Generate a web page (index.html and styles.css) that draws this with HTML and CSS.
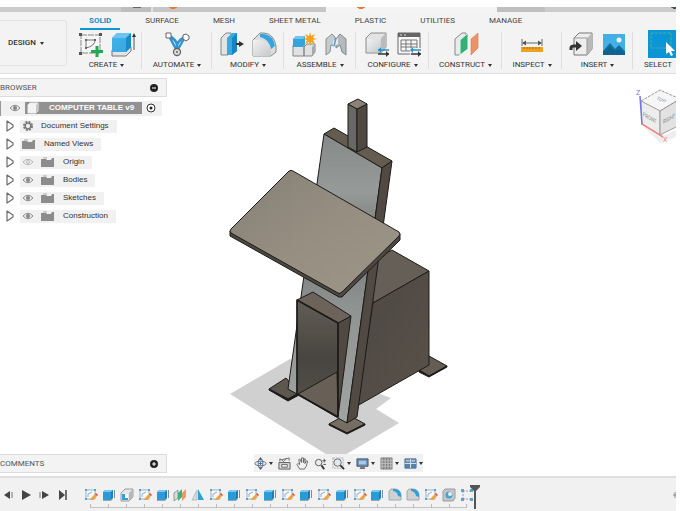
FILE: index.html
```html
<!DOCTYPE html>
<html lang="en">
<head>
<meta charset="utf-8">
<title>Computer table v9</title>
<meta name="viewport" content="width=device-width, initial-scale=1">
<link rel="stylesheet" href="styles.css">
</head>
<body>
<svg class="defs" aria-hidden="true">
  <defs>
    <linearGradient id="gBlue" x1="0" y1="0" x2="1" y2="1"><stop offset="0" stop-color="#45b4ea"/><stop offset="1" stop-color="#35a5e0"/></linearGradient>
    <linearGradient id="gGrey" x1="0" y1="0" x2="1" y2="1"><stop offset="0" stop-color="#f2f2f2"/><stop offset="1" stop-color="#c6c8ca"/></linearGradient>
  </defs>
  <symbol id="t-sketch" viewBox="0 0 14 14"><path d="M2 2h9v9H2z" fill="#f7fafc" stroke="#8fb3cc" stroke-width="1"/><path d="M4 9V6l4-2" fill="none" stroke="#9ab" /><path d="M1 1h2v2H1zM10 1h2v2h-2zM1 10h2v2H1z" fill="#6d9dbd"/><path d="M6 12l1-2 4-4 2 2-4 4z" fill="#f0a23c"/><path d="M11 6l1-1 2 2-1 1z" fill="#d8473b"/></symbol>
  <symbol id="t-extrude" viewBox="0 0 14 14"><path d="M1 4l2-2h8v7l-2 3H1z" fill="#2a9bd8"/><path d="M1 4l2-2h8L9 4z" fill="#7cc9ee"/><path d="M9 4l2-2v8l-2 2z" fill="#1c7fb8"/><path d="M1 12h8l2-2v1l-2 2H1z" fill="#9aa"/><path d="M12.500 2v8" stroke="#889" stroke-width="1"/></symbol>
  <symbol id="t-shell" viewBox="0 0 14 14"><path d="M1 5l4-4h8v8l-4 4H1z" fill="#e6e7e8" stroke="#9b9da0"/><path d="M9 5l4-4v8l-4 4z" fill="#b5b7b9"/><path d="M2 6h6v6H2z" fill="#3a9fd3"/><path d="M5 6h3v4H5z" fill="#fff"/></symbol>
  <symbol id="t-plane" viewBox="0 0 14 14"><path d="M1 5l4-3v8l-4 3z" fill="#d8dadb" stroke="#999"/><path d="M5 5l4-4v8l-4 4z" fill="#39b37a"/><path d="M9 5l4-4v8l-4 4z" fill="#ef9765"/></symbol>
  <symbol id="t-mirror" viewBox="0 0 14 14"><path d="M6 2v10H1z" fill="#d9dcdf" stroke="#a9adb0" stroke-width=".7"/><path d="M7 1l6 11H7z" fill="#329ed6"/></symbol>
  <symbol id="t-fillet" viewBox="0 0 14 14"><path d="M1 3l2-2h4a6 6 0 0 1 6 6v5H1z" fill="#cfd1d2" stroke="#a6a8aa"/><path d="M5 1h2a6 6 0 0 1 6 6v2l-3-1a6 6 0 0 0-5-5z" fill="#2e9fd8"/></symbol>
  <symbol id="t-hole" viewBox="0 0 14 14"><path d="M1 3l2-2h10v9l-2 3H1z" fill="#c4c6c8" stroke="#999b9d"/><circle cx="7" cy="7" r="3.500" fill="#4aa3cf"/><circle cx="8" cy="6" r="2" fill="#e4f1f8"/></symbol>
  <symbol id="t-pattern" viewBox="0 0 14 14"><path d="M3 3h8M3 3v8M3 11h8" fill="none" stroke="#8fa5b3" stroke-dasharray="2 1"/><path d="M1 1h3v3H1zM10 1h3v3h-3zM1 10h3v3H1zM10 10h3v3h-3z" fill="#58a6d0"/></symbol>
  <symbol id="eye" viewBox="0 0 12 8"><path d="M1 4q5-5.500 10 0q-5 5.500-10 0z" fill="#eee" stroke="#8b8b8b"/><circle cx="6" cy="4" r="2" fill="#858585"/></symbol>
  <symbol id="eye-off" viewBox="0 0 12 8"><path d="M1 4q5-5.500 10 0q-5 5.500-10 0z" fill="none" stroke="#b5b5b5"/><circle cx="6" cy="4" r="1.500" fill="none" stroke="#bbb"/></symbol>
  <symbol id="folder" viewBox="0 0 13 10"><path d="M0 2h5l1 1h4l1-2h2v9H0z" fill="#8c8c8c"/><path d="M3 0v2M5 0v2" stroke="#aaa"/></symbol>
  <symbol id="twist" viewBox="0 0 8 12"><path d="M1 1v10l6-4V5z" fill="#fff" stroke="#6a6a6a" stroke-width="1.200" stroke-linejoin="round"/></symbol>
</svg>

<div class="app">
  <div class="doc-tabs" aria-hidden="true">
    <span class="doc-seg doc-seg-first"></span><span class="doc-seg doc-seg-home"></span><span class="doc-seg doc-seg-file"></span><span class="doc-seg doc-seg-active"></span><span class="doc-seg doc-seg-extra"></span><span class="doc-seg doc-seg-rest"></span>
  </div>

  <header class="ribbon">
    <button class="workspace" type="button">DESIGN<span class="caret"></span></button>
    <div class="ribbon-main">
      <nav class="tabs">
        <a class="tab tab-active" href="#solid">SOLID</a>
        <a class="tab" href="#surface">SURFACE</a>
        <a class="tab" href="#mesh">MESH</a>
        <a class="tab" href="#sheet">SHEET METAL</a>
        <a class="tab" href="#plastic">PLASTIC</a>
        <a class="tab" href="#utilities">UTILITIES</a>
        <a class="tab" href="#manage">MANAGE</a>
      </nav>
      <div class="groups">
        <section class="group">
          <div class="tools">
            <button type="button" aria-label="Create sketch"><svg class="tool" viewBox="0 0 26 26"><path d="M3 4h19v18H3z" fill="#f6f6f6" stroke="#888" stroke-dasharray="6 1"/><path d="M1 2h3v3H1zM21 2h3v3h-3zM1 21h3v3H1z" fill="#555"/><path d="M8 17V9h9q0 6-9 8z" fill="none" stroke="#777"/><path d="M7 8h2v2H7zM16 8h2v2h-2zM7 16h2v2H7z" fill="#666"/><path d="M19 15v11M13 20.500h12" stroke="#22a84e" stroke-width="3"/></svg></button>
            <button type="button" aria-label="Extrude"><svg class="tool" viewBox="0 0 26 26"><path d="M2 19v6h14l5-5v-4" fill="#e4e4e4" stroke="#777"/><path d="M2 7l5-5h14v14l-5 5H2z" fill="url(#gBlue)"/><path d="M2 7l5-5h14l-5 5z" fill="#6ac4ef"/><path d="M16 7l5-5v14l-5 5z" fill="#1b8ac8"/><path d="M24 5v14" stroke="#555"/><path d="M22 6l2-4 2 4z" fill="#333"/></svg></button>
          </div>
          <button class="group-label" type="button">CREATE<span class="caret"></span></button>
        </section>
        <section class="group">
          <div class="tools">
            <button type="button" aria-label="Automate"><svg class="tool" viewBox="0 0 26 26"><path d="M5 5q7 3 8 9q2-6 9-8M13 12v8M5 5l8 15M21 6l-8 14" fill="none" stroke="#3295cd" stroke-width="2.500"/><path d="M2 2h5v5H2z" fill="#fff" stroke="#666"/><path d="M19 4l3-1 3 2v3l-3 2-3-2z" fill="#fff" stroke="#666"/><circle cx="13" cy="21" r="3.500" fill="#ddd" stroke="#666" stroke-width="1.300"/><circle cx="13" cy="21" r="1" fill="#666"/></svg></button>
          </div>
          <button class="group-label" type="button">AUTOMATE<span class="caret"></span></button>
        </section>
        <section class="group">
          <div class="tools">
            <button type="button" aria-label="Press pull"><svg class="tool" viewBox="0 0 26 26"><path d="M2 7l5-5h5v19l-3 3H2z" fill="#e1e4e5" stroke="#858789"/><path d="M8 7l5-5h5v18l-5 4H8z" fill="#39a9e2"/><path d="M13 7l5-5v18l-5 4z" fill="#1685c3"/><path d="M17 13h4" stroke="#333" stroke-width="2"/><path d="M20 10l5 3-5 3z" fill="#333"/></svg></button>
            <button type="button" aria-label="Fillet"><svg class="tool" viewBox="0 0 26 26"><path d="M2 9l7-7h4q10 1 12 13v6l-5 4H2z" fill="#ddd" stroke="#8b8b8b"/><path d="M2 9q14-2 18 11v5H2z" fill="url(#gGrey)"/><path d="M9 3h4q9 1 11 12l-4 3Q18 8 9 6z" fill="#32a5df"/></svg></button>
          </div>
          <button class="group-label" type="button">MODIFY<span class="caret"></span></button>
        </section>
        <section class="group">
          <div class="tools">
            <button type="button" aria-label="New component"><svg class="tool" viewBox="0 0 26 26"><path d="M2 14h11v11H2zM13 16l3-3h8v8l-3 4h-8z" fill="#e0e1e2" stroke="#85878a"/><path d="M21 16l3-3v8l-3 4z" fill="#aaa"/><path d="M2 8l3-3h9v9l-2 2H2z" fill="#32a5df"/><path d="M2 8l3-3h9l-2 3z" fill="#70c5ee"/><path d="M19 1l1 4 4-2-2 4 4 1-4 1 2 4-4-2-1 4-1-4-4 2 2-4-4-1 4-1-2-4 4 2z" fill="#f5a21b"/></svg></button>
            <button type="button" aria-label="Joint"><svg class="tool" viewBox="0 0 26 26"><path d="M3 8l6-5 3 3v9l-4-1-1 7-4 3z" fill="#c8cbcd" stroke="#8b8f92"/><path d="M23 8l-6-5-4 5v9l4-3 2 7 4 3z" fill="#b6babc" stroke="#83878a"/><path d="M10 10l5-3v6l-5 3z" fill="#e9eced"/><path d="M11 15l2-8" stroke="#4ca2ce" stroke-width="1.500"/></svg></button>
          </div>
          <button class="group-label" type="button">ASSEMBLE<span class="caret"></span></button>
        </section>
        <section class="group">
          <div class="tools">
            <button type="button" aria-label="Configure"><svg class="tool" viewBox="0 0 26 26"><path d="M2 7l5-5h15v14l-5 6H2z" fill="#e3e3e3" stroke="#8b8b8b"/><path d="M17 7l5-5v14l-5 6z" fill="#b9bbbd"/><path d="M3 8h14v13H3z" fill="url(#gGrey)"/><path d="M14 19h11" stroke="#2a8fc9" stroke-width="1.500"/><path d="M14 23h11" stroke="#333" stroke-width="1.500"/><path d="M17 16v6l-3-3z" fill="#2a8fc9"/><path d="M22 20v6l3-3z" fill="#333"/></svg></button>
            <button type="button" aria-label="Configuration table"><svg class="tool" viewBox="0 0 26 26"><path d="M2 2h22v21H2z" fill="#f8f8f8" stroke="#666"/><path d="M2 2h22v4H2z" fill="#666"/><path d="M4 4h2M8 4h2" stroke="#ddd"/><path d="M5 9h16v11H5zM5 13h16M5 16h16M10 9v11M15 9v11" fill="none" stroke="#777"/><path d="M14 17h12v9H14z" fill="#f3f3f3"/><path d="M15 19h10" stroke="#2a8fc9" stroke-width="1.500"/><path d="M15 23h10" stroke="#333" stroke-width="1.500"/><path d="M17 16v6l-3-3z" fill="#2a8fc9"/><path d="M22 20v6l3-3z" fill="#333"/></svg></button>
          </div>
          <button class="group-label" type="button">CONFIGURE<span class="caret"></span></button>
        </section>
        <section class="group">
          <div class="tools">
            <button type="button" aria-label="Offset plane"><svg class="tool" viewBox="0 0 26 26"><path d="M2 8l7-6h4v16l-7 6H2z" fill="#e8eaeb" stroke="#888"/><path d="M7 9l8-7v16l-8 6z" fill="#31b176" stroke="#e9f5ef"/><path d="M18 8l7-6v15l-7 7z" fill="#ee9365" stroke="#d87b50" stroke-width=".6"/></svg></button>
          </div>
          <button class="group-label" type="button">CONSTRUCT<span class="caret"></span></button>
        </section>
        <section class="group">
          <div class="tools">
            <button type="button" aria-label="Measure"><svg class="tool" viewBox="0 0 26 26"><path d="M3 8v7M23 8v7M4 12h18" stroke="#666"/><path d="M7 9.500v5L3 12zM19 9.500v5l4-2.500z" fill="#555"/><path d="M2 16h22v5H2z" fill="#f0a11f"/><path d="M5 16v2M8 16v2M11 16v2M14 16v2M17 16v2M20 16v2" stroke="#a86c10"/></svg></button>
          </div>
          <button class="group-label" type="button">INSPECT<span class="caret"></span></button>
        </section>
        <section class="group">
          <div class="tools">
            <button type="button" aria-label="Insert derive"><svg class="tool" viewBox="0 0 26 26"><path d="M5 7l5-5h13v16l-5 6H5z" fill="#eee" stroke="#777"/><path d="M18 7l5-5v16l-5 6z" fill="#b8babb"/><path d="M5 7h13v17" fill="none" stroke="#999"/><path d="M2 19v-2q0-2 3-2h3" fill="none" stroke="#333" stroke-width="3"/><path d="M7 10l6 5-6 5z" fill="#333"/></svg></button>
            <button type="button" aria-label="Insert image"><svg class="tool" viewBox="0 0 26 26"><path d="M2 3h22v21H2z" fill="#43b0e5"/><path d="M2 20l7-8 5 6 4-4 6 6v4H2z" fill="#146f9f"/><path d="M2 21l7-6 5 5 4-2 6 4v2H2z" fill="#0f638f"/><circle cx="18" cy="9" r="2.500" fill="#e9f5fb"/></svg></button>
          </div>
          <button class="group-label" type="button">INSERT<span class="caret"></span></button>
        </section>
        <section class="group group-last">
          <div class="tools">
            <button type="button" aria-label="Select"><svg class="tool-select" viewBox="0 0 28 28"><path d="M0 0h28v28H0z" fill="#0b94d6"/><path d="M3 3h20v15H3z" fill="none" stroke="#45b487" stroke-dasharray="3 1"/><path d="M18 12v12l3-2 2 4 2-1-2-4h4z" fill="#fff"/></svg></button>
          </div>
          <button class="group-label" type="button">SELECT</button>
        </section>
      </div>
    </div>
  </header>

  <main class="canvas">
    <svg class="model" viewBox="228 95 220 360" role="img" aria-label="Computer table">
      <defs>
        <linearGradient id="mTop" x1="0" y1="0" x2="1" y2="1"><stop offset="0" stop-color="#857f75"/><stop offset=".5" stop-color="#968e81"/><stop offset="1" stop-color="#9d9588"/></linearGradient>
        <linearGradient id="mBoard" x1="0" y1="0" x2="0" y2="1"><stop offset="0" stop-color="#858988"/><stop offset=".2" stop-color="#969b99"/><stop offset=".38" stop-color="#747877"/><stop offset=".6" stop-color="#8f9492"/><stop offset="1" stop-color="#a0a5a3"/></linearGradient>
        <linearGradient id="mBox" x1="0" y1="0" x2="1" y2="1"><stop offset="0" stop-color="#4c4741"/><stop offset="1" stop-color="#59524b"/></linearGradient>
        <linearGradient id="mIn" x1="0" y1="0" x2="0" y2="1"><stop offset="0" stop-color="#625d55"/><stop offset=".5" stop-color="#484540"/><stop offset="1" stop-color="#57524b"/></linearGradient>
      </defs>
      <path d="M230 394l60-35 90 35 11 4-15 11 23 14-37 22-19 11h-14z" fill="#d0d0d0"/>
      <g stroke="#1d1b19" stroke-width="1" stroke-linejoin="round">
        <path d="M269 389l17-11 13 15-11 6z" fill="#5e574e"/>
        <path d="M269 389v1l19 11 11-6v-2l-11 6z" fill="#1d1b19"/>
        <path d="M419 370l10-14 18 10-18 10z" fill="#655e54"/>
        <path d="M419 370v2l10 5 18-10v-1l-18 10z" fill="#1d1b19"/>
        <path d="M329 424l18-10 18 10-18 9z" fill="#766e62"/>
        <path d="M329 424v1l18 9 18-9v-1l-18 9z" fill="#1d1b19"/>
        <path d="M392 250l37 21-56 32-5-40z" fill="#665f57"/>
        <path d="M373 303l56-32v94l-72 41z" fill="url(#mBox)"/>
        <path d="M324 134l10-6 58 33-10 7z" fill="#655c50"/>
        <path d="M324 134l58 34-35 255-9-5-41-24-9-5z" fill="url(#mBoard)"/>
        <path d="M382 168l10-7-35 256-10 6z" fill="#504a43"/>
        <path d="M348 104l9 5v43l-9-5z" fill="#686965"/>
        <path d="M357 109l10-5v43l-10 5z" fill="#504943"/>
        <path d="M348 104l10-5 9 5-10 5z" fill="#8b8377"/>
        <path d="M297 300l41 23v94l-41-23z" fill="url(#mIn)"/>
        <path d="M298 394l39-22 1 45z" fill="#686057"/>
        <path d="M338 323l13-7-13 101z" fill="#504941"/>
        <path d="M297 300l16-8 38 24-13 7z" fill="#6c645a"/>
        <path d="M297 300l41 23v94l-41-23z" fill="none" stroke-width="1.500"/>
        <path d="M230 231v5l109 61h3l58-57v-6l-60 58z" fill="#4c4740"/>
        <path d="M289 171q2-1 4 0l106 61q2 2 0 4l-57 56q-2 2-4 1L231 233q-2-2 0-4z" fill="url(#mTop)"/>
      </g>
    </svg>

    <aside class="browser">
      <div class="panel-bar"><span>BROWSER</span><button class="dot" type="button" aria-label="Collapse browser"><svg viewBox="0 0 8 8"><circle cx="4" cy="4" r="4" fill="#222"/><path d="M2 4h4" stroke="#fff"/></svg></button></div>
      <ul class="tree">
        <li class="row row-root">
          <span class="chip chip-root"><svg class="eye"><use href="#eye"/></svg><span class="root-name"><svg class="cube" viewBox="0 0 12 12"><path d="M1 3l2-2h8v8l-2 2H1z" fill="#f3f3f3" stroke="#eee"/><path d="M9 3l2-2v8l-2 2z" fill="#c5c9cc"/></svg><b>COMPUTER TABLE v9</b></span><svg class="radio" viewBox="0 0 10 10"><circle cx="5" cy="5" r="4" fill="#fff" stroke="#333"/><circle cx="5" cy="5" r="1.500" fill="#222"/></svg></span>
        </li>
        <li class="row"><svg class="twist"><use href="#twist"/></svg><span class="chip"><svg class="gear" viewBox="0 0 12 12"><circle cx="6" cy="6" r="4" fill="none" stroke="#777" stroke-width="2" stroke-dasharray="2 1.140"/><circle cx="6" cy="6" r="2.800" fill="#eee" stroke="#777" stroke-width="1.300"/></svg><span>Document Settings</span></span></li>
        <li class="row"><svg class="twist"><use href="#twist"/></svg><span class="chip"><svg class="folder"><use href="#folder"/></svg><span>Named Views</span></span></li>
        <li class="row"><svg class="twist"><use href="#twist"/></svg><span class="chip"><svg class="eye"><use href="#eye-off"/></svg><svg class="folder"><use href="#folder"/></svg><span>Origin</span></span></li>
        <li class="row"><svg class="twist"><use href="#twist"/></svg><span class="chip"><svg class="eye"><use href="#eye"/></svg><svg class="folder"><use href="#folder"/></svg><span>Bodies</span></span></li>
        <li class="row"><svg class="twist"><use href="#twist"/></svg><span class="chip"><svg class="eye"><use href="#eye"/></svg><svg class="folder"><use href="#folder"/></svg><span>Sketches</span></span></li>
        <li class="row"><svg class="twist"><use href="#twist"/></svg><span class="chip"><svg class="eye"><use href="#eye"/></svg><svg class="folder"><use href="#folder"/></svg><span>Construction</span></span></li>
      </ul>
    </aside>

    <svg class="viewcube" viewBox="634 84 42 62" role="img" aria-label="View cube">
      <path d="M642 125l18 12 16-7v7l-16 6z" fill="#eee"/>
      <path d="M641 101l19-11 20 9-20 12z" fill="#f6f6f6" stroke="#999" stroke-dasharray="3 1"/>
      <path d="M641 101l19 10v24l-18-11z" fill="#ededed" stroke="#999" stroke-width=".8"/>
      <path d="M660 111l20-12v26l-20 10z" fill="#e2e2e2" stroke="#888" stroke-width=".8"/>
      <path d="M640 96l2 29" stroke="#7676df" stroke-width="1.500"/>
      <path d="M642 124l21 13" stroke="#e88" stroke-width="1.500"/>
      <text class="cube-face" transform="matrix(.9 .4 -.5 .7 656 99)">TOP</text>
      <text class="cube-face" transform="matrix(.85 .5 0 1.200 643 116)">FRONT</text>
      <text class="cube-face" transform="matrix(.85 -.45 0 1.200 663 124)">RIGHT</text>
      <text class="axis axis-z" x="636" y="95">Z</text>
      <text class="axis axis-x" x="663" y="142">X</text>
    </svg>

    <div class="comments panel-bar"><span>COMMENTS</span><button class="dot" type="button" aria-label="Add comment"><svg viewBox="0 0 8 8"><circle cx="4" cy="4" r="4" fill="#222"/><path d="M2 4h4M4 2v4" stroke="#fff"/></svg></button></div>

    <div class="navbar">
      <button type="button" aria-label="Orbit"><svg viewBox="0 0 14 14"><ellipse cx="7" cy="7" rx="6" ry="2.500" fill="none" stroke="#666"/><ellipse cx="7" cy="7" rx="2.500" ry="5" fill="none" stroke="#568"/><path d="M7 0l2 3H5zM7 14l2-3H5z" fill="#555"/><path d="M5 7h4M7 5v4" stroke="#37b"/></svg><span class="caret"></span></button>
      <button type="button" aria-label="Look at"><svg viewBox="0 0 14 14"><path d="M1 6h12v7H1z" fill="#ddd" stroke="#555"/><path d="M4 8h6v3H4z" fill="#eee" stroke="#666"/><path d="M2 5V2l2 1 8-2v3M4 3l2 2 3-3" fill="none" stroke="#666"/></svg></button>
      <button type="button" aria-label="Pan"><svg viewBox="0 0 14 14"><path d="M4 13L1 8l1-1 2 1-1-5 1-1 2 4V1h2v5l1-4h1l-.500 5 2-3 1 .500L11 10l-2 3z" fill="#f3f3f3" stroke="#555" stroke-width=".9"/></svg></button>
      <button type="button" aria-label="Zoom"><svg viewBox="0 0 14 14"><circle cx="5" cy="6" r="3.500" fill="#e8eef2" stroke="#555"/><path d="M8 9l3 4" stroke="#333" stroke-width="2"/><path d="M9 4h4M11 2v4M10 8h3" stroke="#555"/></svg></button>
      <button type="button" aria-label="Fit"><svg viewBox="0 0 14 14"><path d="M1 1h11v11H1z" fill="none" stroke="#aaa" stroke-dasharray="2 1"/><circle cx="6" cy="6" r="4" fill="#dfe9ef" stroke="#666"/><path d="M9 9l4 4" stroke="#333" stroke-width="2"/></svg><span class="caret"></span></button>
      <button type="button" aria-label="Display settings"><svg viewBox="0 0 14 14"><path d="M1 2h12v8H1z" fill="#5e8fc0" stroke="#555"/><path d="M3 4h8v4H3z" fill="#a8c8e6"/><path d="M5 10h4l1 3H4z" fill="#777"/></svg><span class="caret"></span></button>
      <button type="button" aria-label="Grid"><svg viewBox="0 0 14 14"><path d="M1 1h12v12H1z" fill="#aaa" stroke="#888"/><path d="M4 1v12M7 1v12M10 1v12" stroke="#777"/><path d="M1 4h12M1 7h12M1 10h12" stroke="#bbb"/></svg><span class="caret"></span></button>
      <button type="button" aria-label="Viewports"><svg viewBox="0 0 14 14"><path d="M1 2h12v10H1z" fill="#5682b0" stroke="#52718f"/><path d="M1 7h12M7 2v10" stroke="#dde8f1"/><path d="M2 3h4v2H2zM8 3h4v2H8z" fill="#a5c4e0"/></svg><span class="caret"></span></button>
    </div>
  </main>

  <footer class="timeline">
    <div class="playback">
      <button type="button" aria-label="Step back"><svg viewBox="0 0 12 12"><path d="M8 2v8L2 6z" fill="#444"/><path d="M10 3v6" stroke="#777"/></svg></button>
      <button type="button" aria-label="Play"><svg viewBox="0 0 12 12"><path d="M2 1l9 5-9 5z" fill="#444"/></svg></button>
      <button type="button" aria-label="Step forward"><svg viewBox="0 0 12 12"><path d="M4 2l7 4-7 4z" fill="#444"/><path d="M2 3v6" stroke="#777"/></svg></button>
      <button type="button" aria-label="Go to end"><svg viewBox="0 0 12 12"><path d="M3 1l6 5-6 5z" fill="#444"/><path d="M10 1v10" stroke="#444" stroke-width="1.500"/></svg></button>
    </div>
    <ol class="features">
      <li><svg><use href="#t-sketch"/></svg></li>
      <li><svg><use href="#t-extrude"/></svg></li>
      <li><svg><use href="#t-shell"/></svg></li>
      <li><svg><use href="#t-sketch"/></svg></li>
      <li><svg><use href="#t-extrude"/></svg></li>
      <li><svg><use href="#t-plane"/></svg></li>
      <li><svg><use href="#t-mirror"/></svg></li>
      <li><svg><use href="#t-sketch"/></svg></li>
      <li><svg><use href="#t-extrude"/></svg></li>
      <li><svg><use href="#t-sketch"/></svg></li>
      <li><svg><use href="#t-extrude"/></svg></li>
      <li><svg><use href="#t-sketch"/></svg></li>
      <li><svg><use href="#t-extrude"/></svg></li>
      <li><svg><use href="#t-sketch"/></svg></li>
      <li><svg><use href="#t-extrude"/></svg></li>
      <li><svg><use href="#t-sketch"/></svg></li>
      <li><svg><use href="#t-extrude"/></svg></li>
      <li><svg><use href="#t-fillet"/></svg></li>
      <li><svg><use href="#t-fillet"/></svg></li>
      <li><svg><use href="#t-sketch"/></svg></li>
      <li><svg><use href="#t-hole"/></svg></li>
      <li><svg><use href="#t-pattern"/></svg></li>
    </ol>
    <svg class="marker" viewBox="0 0 10 24"><path d="M0 0h10v2L6 6v18H4V6L0 2z" fill="#555"/></svg>
    <svg class="settings" viewBox="0 0 3 6"><path d="M0 3h3M2 0v6" stroke="#888"/></svg>
  </footer>
</div>
</body>
</html>
```
FILE: styles.css
```css
* { box-sizing: border-box; }

body {
  margin: 0;
  background: #fff;
  color: #333;
  font-family: Roboto, "Liberation Sans", sans-serif;
  font-size: 8px;
  line-height: 10px;
}

svg { display: block; }
.defs { position: absolute; width: 0; height: 0; }

button {
  display: flex;
  align-items: center;
  margin: 0;
  padding: 0;
  border: 0;
  background: none;
  color: inherit;
  font: inherit;
}

.caret {
  flex: none;
  border: 2px solid transparent;
  border-top: 3px solid #333;
  border-bottom: 0;
}

.app {
  display: flex;
  flex-direction: column;
  min-height: 100vh;
  padding: 7px 4px 0 0;
  overflow: hidden;
}

/* Document tab strip */
.doc-tabs { display: flex; height: 5px; }
.doc-seg { background: #cbcbcb; }
.doc-seg-first { flex: 0 0 121px; }
.doc-seg-home { flex: 0 0 30px; background: radial-gradient(ellipse 5px 1px at 16px 0, #666 90%, #bdbdbd); }
.doc-seg-file { flex: 0 0 175px; border-left: 2px solid #e2e2e2; background: radial-gradient(ellipse 4px 2px at 20px 0, #e5793c 90%, #c6c6c6); }
.doc-seg-active { flex: 0 0 171px; background: radial-gradient(ellipse 4px 2px at 35px 0, #e5793c 90%, #f4f4f4); }
.doc-seg-extra { flex: 0 0 48px; background: #bfbfbf; }
.doc-seg-rest { flex: 1; background: radial-gradient(ellipse 5px 2px at 100% 0, #45515b 90%, #cbcbcb); }

/* Ribbon */
.ribbon {
  display: flex;
  border-bottom: 1px solid #e0e0e0;
  background: #f3f3f3;
}
.workspace {
  flex: none;
  gap: 4px;
  width: 67px;
  height: 46px;
  margin-top: 8px;
  padding-left: 8px;
  border: 1px solid #e4e4e4;
  border-left: 0;
  border-radius: 0 3px 3px 0;
  font-weight: 500;
}
.ribbon-main { flex: 1; min-width: 0; margin-left: 4px; }
.tabs { display: flex; gap: 16px; padding-left: 9px; }
.tab {
  padding: 4px 9px 2px;
  border-bottom: 2px solid transparent;
  color: #444;
  text-decoration: none;
  white-space: nowrap;
}
.tab-active { border-color: #0c96d2; color: #0c8fca; font-weight: 700; }

.groups {
  display: grid;
  grid-template-columns: 71px 70px 72px 72px 73px 73px 60px 71px 1fr;
}
.group {
  display: flex;
  flex-direction: column;
  align-items: center;
  gap: 2px;
  min-width: 0;
  padding-bottom: 3px;
  background: linear-gradient(#dedede, #dedede) 100% 2px / 1px 37px no-repeat;
}
.group-last { align-items: flex-start; padding-left: 15px; overflow: hidden; background: none; }
.group-last .group-label { margin-left: -4px; }
.tools { display: flex; align-items: center; gap: 6px; height: 28px; }
.tool { width: 26px; height: 26px; }
.tool-select { width: 28px; height: 28px; }
.group-label { gap: 3px; white-space: nowrap; }

/* Canvas: every overlay shares one grid cell */
.canvas {
  flex: 1;
  display: grid;
  grid-template-columns: minmax(0, 1fr);
  background: #fff;
}
.canvas > * { grid-area: 1 / 1; }
.model { place-self: center; width: 220px; height: 360px; }

.panel-bar {
  display: flex;
  align-items: center;
  justify-content: space-between;
  width: 167px;
  height: 19px;
  padding-right: 8px;
  border: 1px solid #dcdcdc;
  border-left: 0;
  background: #f3f3f3;
  color: #555;
}
.dot svg { width: 8px; height: 8px; }

.browser { place-self: start; padding-top: 4px; }
.tree {
  display: flex;
  flex-direction: column;
  gap: 4px;
  margin: 0;
  padding: 4px 0 0;
  list-style: none;
  font-family: "Liberation Sans", sans-serif;
}
.row { display: flex; align-items: center; gap: 6px; height: 14px; padding-left: 6px; }
.row-root { padding-left: 0; }
.chip {
  display: flex;
  align-items: center;
  gap: 7px;
  height: 13px;
  padding: 0 8px 0 2px;
  background: #f1f1f1;
}
.chip .folder + span { margin-left: 2px; }
.chip-root { gap: 4px; height: 15px; padding: 0 6px 0 8px; border-left: 1px solid #999; }
.root-name {
  display: flex;
  align-items: center;
  gap: 10px;
  height: 12px;
  padding: 0 8px 0 2px;
  background: #929292;
  color: #fff;
}
.eye { width: 12px; height: 8px; }
.folder { width: 13px; height: 10px; }
.twist { width: 8px; height: 12px; }
.gear, .cube { width: 12px; height: 12px; }
.radio { width: 10px; height: 10px; }

.viewcube { place-self: start end; width: 42px; height: 62px; margin-top: 10px; }
.cube-face { fill: #888; font-size: 5px; }
.axis { font-size: 7px; }
.axis-z { fill: #7676df; }
.axis-x { fill: #e88; }

.comments { place-self: end start; margin-bottom: 3px; }
.navbar {
  place-self: end center;
  display: flex;
  align-items: center;
  gap: 5px;
  height: 18px;
  margin-bottom: 4px;
  background: #f1f1f1;
}
.navbar button { gap: 2px; }
.navbar svg { width: 13px; height: 13px; }

/* Timeline */
.timeline {
  display: flex;
  align-items: flex-start;
  height: 35px;
  padding-top: 7px;
  border-top: 2px solid #e0e0e0;
  background: #f1f1f1;
}
.playback { display: flex; gap: 6px; width: 82px; padding: 4px 0 0 2px; }
.playback svg { width: 12px; height: 12px; }
.features {
  display: flex;
  flex: 0 0 394px;
  margin: 0;
  padding: 3px 0 0;
  list-style: none;
}
.features li {
  flex: 1;
  display: flex;
  justify-content: center;
  height: 20px;
  background:
    linear-gradient(#bbb, #bbb) 50% 16px / 1px 4px no-repeat,
    linear-gradient(#c4c4c4, #c4c4c4) 0 100% / 100% 1px no-repeat;
}
.features li:first-child { background-size: 1px 4px, 50% 1px; background-position: 50% 16px, 100% 100%; }
.features li:last-child { background-size: 1px 4px, 50% 1px; }
.features svg { width: 14px; height: 14px; }
.marker { flex: none; width: 10px; height: 24px; margin-left: -6px; }
.settings { width: 3px; height: 6px; margin: 7px 0 0 auto; }
```
